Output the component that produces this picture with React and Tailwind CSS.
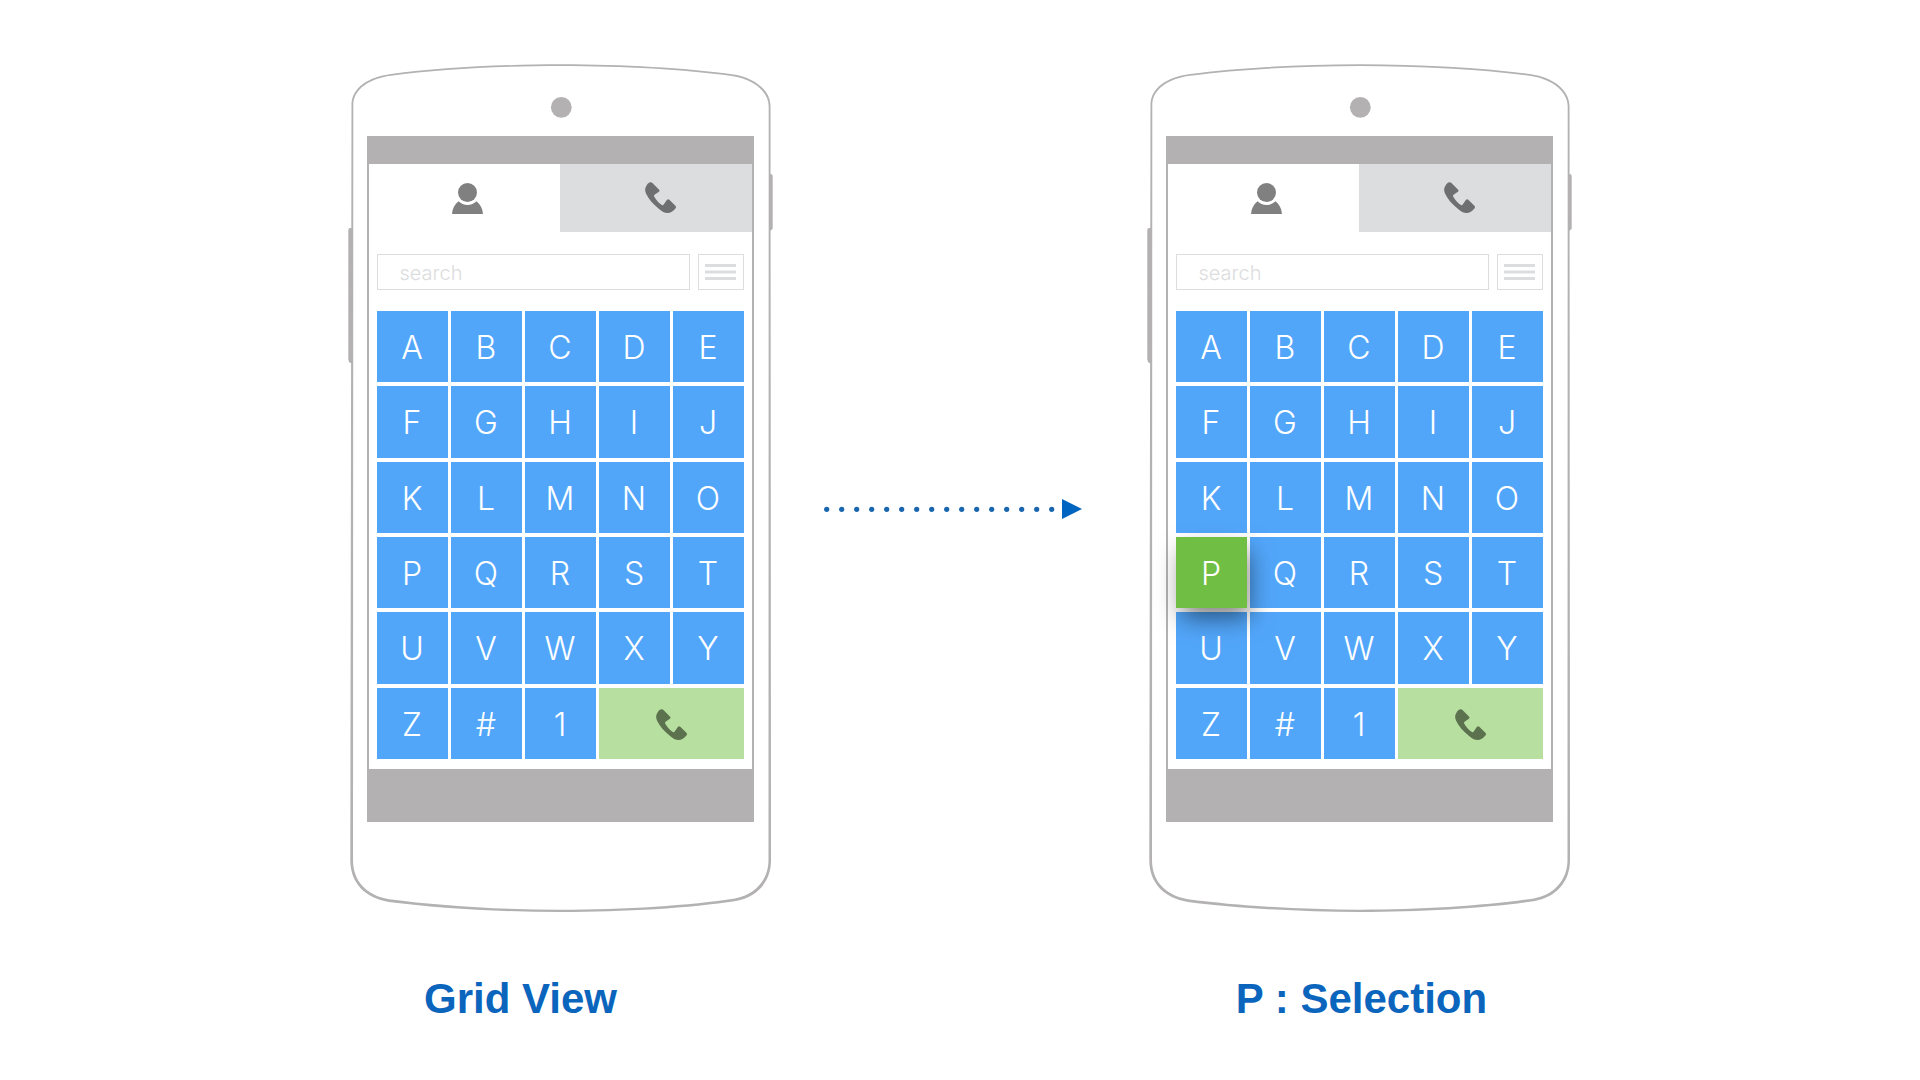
import React from "react";

const KEYS = "ABCDEFGHIJKLMNOPQRSTUVWXYZ#1".split("");

function PersonIcon() {
  return (
    <svg viewBox="0 0 31 31" className="size-[31px]" fill="currentColor" aria-hidden="true">
      <circle cx="15.5" cy="9.5" r="9.5" />
      <path d="M0 31C.4 25.500 2.700 21.300 6.500 18.300A12.800 12.800 0 0 0 24.500 18.300C28.300 21.300 30.600 25.500 31 31Z" />
    </svg>
  );
}

function HandsetIcon() {
  return (
    <svg viewBox="0 0 31 31" className="size-[31px]" fill="currentColor" aria-hidden="true">
      <path d="M5 .3C5.800 0 6.600.2 7.200.8L13.900 7.500C14.700 8.300 14.700 9 13.900 9.700L9.900 12.600C9 13.200 8.800 13.900 9.300 14.800C11.300 18.100 14 21.200 16.900 23C17.600 23.400 18.200 23.300 18.700 22.500L21.800 18.100C22.600 17.100 23.400 17 24.300 17.800L30.400 23.800C31.200 24.700 31.200 25.600 30.400 26.400C28.500 29 25.500 30.800 22.500 31C19.500 31 17 29.500 13.500 26.500C8 22 3.500 17 1 11.500C0 9-.2 7 .8 5C1.800 2.800 3 1 5 .3Z" />
    </svg>
  );
}

function MenuIcon() {
  return (
    <svg viewBox="0 0 31 16" className="h-4 w-[31px]" fill="currentColor" aria-hidden="true">
      <path d="M0 0h31v3H0zM0 6.500h31v3H0zM0 13h31v3H0z" />
    </svg>
  );
}

function PhoneShell() {
  return (
    <svg viewBox="0 0 426 848" className="absolute inset-0 size-full" fill="#b3b1b2" aria-hidden="true">
      <path d="M4 164H2Q.3 164 .3 167V295Q.3 298 2.500 299H4ZM421 110h2q1.700 0 1.700 3v51q0 2-3.700 3z" />
      <path
        fillRule="evenodd"
        d="M3.500 41C3.500 24 20 13 43 10C90 4 150 .3 213 .3S336 4 384 10.200C406 13.200 422.500 26 422.500 42L423 796C423 818 409 833 388 837C343 844 276 848 213 848S88 844 41 838C17 834 2.300 819 2.300 796Z
           M5.300 41L5 796C5 816.500 18 831.300 41 835.200C88 841.300 150 845.700 213 845.700S343 841.300 387 834.400C407 830.800 420.500 816 420.500 796L420.700 42C420.700 27.500 405 14.900 384 11.900C336 5.700 276 2 213 2S90 5.700 43 11.700C21 14.500 5.300 25.500 5.300 41Z"
      />
      <circle cx="213.3" cy="43.3" r="10.4" />
    </svg>
  );
}

function Key({ label, selected }) {
  const base = "flex items-center justify-center pt-[3px] text-[32px] leading-none font-light text-white ";
  return (
    <button
      type="button"
      aria-pressed={selected}
      className={
        base +
        (selected
          ? "relative z-10 bg-[#70be44] shadow-[4px_12px_24px_-2px_rgba(0,0,0,0.5)]"
          : "bg-[#52a6fa]")
      }
    >
      {label}
    </button>
  );
}

function Phone({ caption, captionClass, selectedKey }) {
  return (
    <figure className="flex w-[426px] shrink-0 flex-col">
      <div className="relative pt-[72px] pr-5 pb-[90px] pl-[19px]">
        <PhoneShell />
        <div className="relative border-x-2 border-t-[28px] border-b-[53px] border-[#b3b1b2]">
          <div role="tablist" className="grid h-[68px] grid-cols-2">
            <button
              type="button"
              role="tab"
              aria-selected="true"
              aria-label="Contacts"
              className="flex items-center justify-center bg-white pl-1.5 text-[#808080]"
            >
              <PersonIcon />
            </button>
            <button
              type="button"
              role="tab"
              aria-selected="false"
              aria-label="Calls"
              className="flex items-center justify-center bg-[#dcddde] pb-0.5 pl-2.5 text-[#6e6f71]"
            >
              <HandsetIcon />
            </button>
          </div>
          <div className="bg-white px-2 pt-[22px] pb-2.5">
            <div className="flex h-9 gap-2">
              <input
                type="search"
                aria-label="Search contacts"
                placeholder="search"
                className="min-w-0 flex-1 border border-[#dcddde] bg-white px-[22px] pt-0.5 text-[20px] font-light text-gray-600 outline-none placeholder:text-[#dcddde]"
              />
              <button
                type="button"
                aria-label="Menu"
                className="flex w-[46px] items-center justify-center border border-[#dcddde] text-[#dcddde]"
              >
                <MenuIcon />
              </button>
            </div>
            <div className="mt-[21px] grid h-[448px] grid-cols-5 grid-rows-6 gap-x-[3px] gap-y-1">
              {KEYS.map((key) => (
                <Key key={key} label={key} selected={key === selectedKey} />
              ))}
              <button
                type="button"
                aria-label="Call"
                className="col-span-2 flex items-center justify-center bg-[#b7e0a0] pt-0.5 text-[#5c714e]"
              >
                <HandsetIcon />
              </button>
            </div>
          </div>
        </div>
      </div>
      <figcaption
        className={
          "pt-[63px] text-center font-['Liberation_Sans',sans-serif] text-[42px] leading-[48px] font-bold text-[#0b65bd] " +
          captionClass
        }
      >
        {caption}
      </figcaption>
    </figure>
  );
}

function DottedArrow() {
  const dots = Array.from({ length: 16 }, (_, i) => i);
  return (
    <svg viewBox="0 0 258 20" className="mt-[435px] mr-[65px] ml-[50px] h-5 w-[258px] shrink-0" aria-hidden="true">
      {dots.map((i) => (
        <circle key={i} cx={2.7 + i * 15} cy="10.3" r="2.6" fill="#1a66ae" />
      ))}
      <path d="M238 0L258 10L238 20Z" fill="#0065c1" />
    </svg>
  );
}

export default function App() {
  return (
    <main className="flex min-h-screen items-start justify-center bg-white pt-16 font-[Inter,sans-serif]">
      <Phone caption="Grid View" captionClass="pr-20" />
      <DottedArrow />
      <Phone caption="P : Selection" captionClass="pl-1" selectedKey="P" />
    </main>
  );
}
